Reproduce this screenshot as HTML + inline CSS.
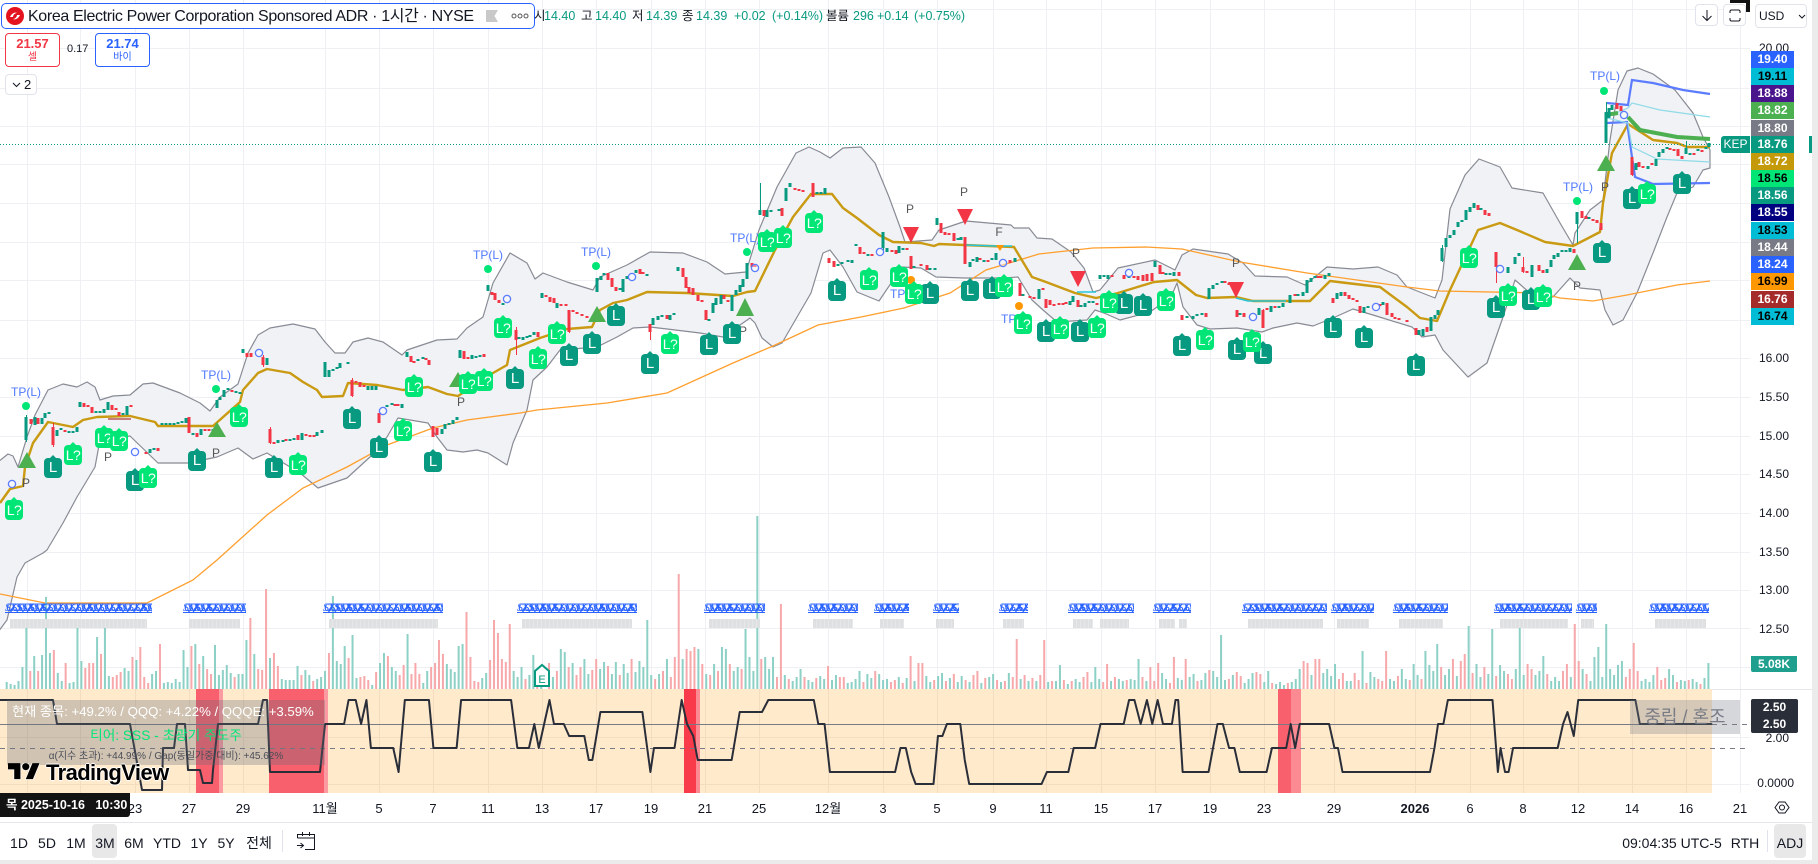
<!DOCTYPE html>
<html lang="ko"><head><meta charset="utf-8"><title>KEP</title>
<style>
html,body{margin:0;padding:0;background:#fff}
body{position:relative;width:1818px;height:864px;overflow:hidden;font-family:"Liberation Sans","Noto Sans CJK KR",sans-serif;color:#131722}
svg.c{position:absolute;left:0;top:0}
.a{position:absolute;white-space:nowrap}
i.m{position:absolute;width:18px;height:20px;margin:-9px 0 0 -9px;border-radius:4px;background:#089981;color:#fff;font:normal 15px/20px "Liberation Sans",sans-serif;text-align:center}
i.m:before{content:"";position:absolute;left:5.5px;top:-3px;width:0;height:0;border-left:3.5px solid transparent;border-right:3.5px solid transparent;border-bottom:3px solid #089981}
i.n{background:#00e676;font-size:14px;letter-spacing:-.5px}
i.n:before{border-bottom-color:#00e676}
.t{position:absolute;left:1751px;width:43px;height:17px;font:bold 12px/17px "Liberation Sans",sans-serif;text-align:center;color:#fff}
.k{color:#000}
.p{position:absolute;right:29px;font:12px/14px "Liberation Sans",sans-serif;color:#131722}
.x{position:absolute;top:801px;font:13px/15px "Liberation Sans","Noto Sans CJK KR",sans-serif;transform:translateX(-50%)}
.q{position:absolute;top:602px;height:10px;overflow:hidden;border-bottom:1px solid #2962ff;font:italic 12px/11px "Liberation Serif",serif;letter-spacing:-5px;color:#2962ff;white-space:nowrap}
.g{position:absolute;top:619px;height:9px;background:repeating-linear-gradient(90deg,#dfe0e2 0 3px,#e6e7e9 3px 4px)}
.r{position:absolute;top:835px;font:14px/16px "Liberation Sans","Noto Sans CJK KR",sans-serif;color:#131722;transform:translateX(-50%)}
.o{position:absolute;top:9px;font:12.5px/15px "Liberation Sans","Noto Sans CJK KR",sans-serif;white-space:nowrap}
.o.v{color:#089981}
.b{position:absolute;box-sizing:border-box;border:1px solid #e0e3eb;border-radius:4px;background:#fff}
</style></head><body>

<svg class="c" width="1818" height="864" viewBox="0 0 1818 864" fill="none">
<!-- grid -->
<path stroke="#eef0f3" d="M27.5 0V793M80.5 0V793M135.5 0V793M189.5 0V793M243.5 0V793M325.5 0V793M379.5 0V793M433.5 0V793M488.5 0V793M542.5 0V793M596.5 0V793M651.5 0V793M705.5 0V793M759.5 0V793M828.5 0V793M883.5 0V793M937.5 0V793M993.5 0V793M1046.5 0V793M1101.5 0V793M1155.5 0V793M1210.5 0V793M1264.5 0V793M1334.5 0V793M1415.5 0V793M1470.5 0V793M1523.5 0V793M1578.5 0V793M1632.5 0V793M1686.5 0V793M1740.5 0V793"/>
<path stroke="#eef0f3" d="M0 9.5H1750M0 48.5H1750M0 88.5H1750M0 126.5H1750M0 164.5H1750M0 203.5H1750M0 242.5H1750M0 280.5H1750M0 320.5H1750M0 358.5H1750M0 397.5H1750M0 436.5H1750M0 474.5H1750M0 513.5H1750M0 552.5H1750M0 590.5H1750M0 628.5H1750M0 667.5H1750M0 737.5H1750M0 784.5H1750"/>
<!-- band -->
<path fill="#f0f2f5" stroke="#888b95" stroke-width="1.2" stroke-linejoin="round" d="M-2 462L8 454 13 456 18 467 27 437 35 415 48 390 63 384 77 387 87 382 95 387 100 400 113 396 130 395 143 384 153 383 180 393 200 403 210 411 220 397 238 384 248 353 258 335 270 328 293 324 315 329 325 342 335 353 345 353 353 342 368 338 383 342 402 355 407 350 437 340 457 339 467 328 483 317 493 283 510 253 527 263 535 279 543 273 567 282 593 290 600 277 627 265 650 252 683 253 707 262 725 274 746 272 759 230 777 187 796 153 809 147 820 152 830 158 843 148 861 147 875 163 889 197 900 227 905 242 932 240 939 230 966 221 1011 225 1014 228 1029 228 1037 238 1052 239 1071 252 1084 268 1093 292 1100 290 1118 268 1155 260 1175 270 1182 255 1193 249 1228 254 1243 263 1255 276 1287 277 1305 285 1327 267 1353 269 1378 267 1397 275 1407 287 1435 298 1442 280 1450 209 1465 175 1479 159 1500 167 1512 188 1543 193 1560 223 1573 245 1575 233 1590 210 1603 200 1610 140 1618 90 1627 71 1638 68 1653 74 1675 90 1693 113 1703 137 1710 150 1710 168 1703 170 1693 187 1677 193 1667 217 1653 253 1637 293 1623 320 1613 325 1605 310 1600 290 1580 288 1570 278 1553 297 1530 293 1515 280 1507 305 1502 320 1487 363 1468 377 1443 350 1435 335 1422 337 1412 327 1373 315 1353 309 1333 318 1313 326 1297 323 1273 328 1262 332 1237 328 1210 329 1197 325 1183 307 1177 283 1171 297 1150 312 1120 320 1104 313 1095 310 1087 320 1057 322 1043 310 1032 300 1018 277 1004 278 964 278 936 277 921 268 902 267 879 301 857 292 843 267 830 250 823 253 811 293 782 343 773 347 762 338 755 323 750 318 723 337 700 333 667 329 650 327 633 328 617 337 597 347 560 350 547 367 533 380 527 410 513 443 507 465 488 453 477 450 463 452 447 450 437 437 428 423 398 418 387 437 370 457 347 478 318 488 300 473 267 453 253 459 238 448 217 457 188 463 158 463 130 436 100 440 95 467 77 497 63 523 47 550 43 553 25 563 17 577 7 620-2 632Z"/>
<!-- orange MA -->
<path stroke="#ff9f2e" stroke-width="1.3" d="M0 594L45 603 147 603 193 580 217 560 267 515 303 488 347 467 387 445 433 428 467 420 520 413 537 410 607 403 667 393 700 378 733 363 773 346 818 325 861 317 904 308 950 293 986 270 1039 254 1093 248 1146 247 1182 249 1240 262 1307 273 1407 287 1440 291 1540 293 1560 298 1593 301 1627 295 1677 285 1710 281"/>
<!-- gold -->
<path stroke="#c99a12" stroke-width="2.4" stroke-linejoin="round" d="M0 503L10 489 23 486 25 467 33 443 48 422 73 427 83 420 97 417 130 416 155 422 158 426 213 426 240 402 243 390 258 373 267 369 290 373 303 382 317 390 322 397 343 396 348 383 377 385 403 390 428 387 447 394 458 396 493 373 507 365 510 350 540 338 567 329 592 327 600 310 613 303 627 300 647 292 687 293 733 296 747 292 755 291 775 250 793 217 811 194 832 194 843 208 857 218 879 235 893 242 921 243 934 246 939 244 1014 247 1032 277 1046 282 1075 293 1096 298 1118 293 1154 282 1177 280 1196 295 1207 298 1236 297 1253 301 1310 301 1330 281 1380 287 1407 307 1420 318 1437 321 1450 290 1478 230 1500 223 1517 230 1545 242 1573 246 1600 232 1603 203 1612 153 1628 124 1653 140 1677 143 1687 147 1710 147"/>
<path stroke="#26c6da" stroke-width="1.5" d="M1077 292H1096M1236 298L1248 301H1286M965 245L995 246H1012"/>
<path stroke="#c77d7d" stroke-width="2" d="M108 419H131"/>
<!-- right side lines -->
<path stroke="#5b7cff" stroke-width="2.2" d="M1607 103L1628 105 1632 80 1653 83 1683 90 1710 94M1607 123L1627 122 1632 157 1635 177 1653 184 1710 183"/>
<path stroke="#8fdbe8" stroke-width="1.2" d="M1607 117L1628 108 1632 103 1660 110 1710 117M1607 118L1628 123 1632 147 1657 159 1710 162"/>
<path stroke="#4caf50" stroke-width="4" d="M1605 115L1618 113M1628 117L1640 130 1677 137 1710 139"/>
<!-- last price -->
<path stroke="#089981" stroke-dasharray="1 2" d="M0 144.5H1721"/>
<!-- wicks -->
<path stroke="#089981" d="M26.5 415V442M760.5 183V212M883.5 232V250M1577.5 212V243M1606.5 102V143M1686.5 141V154M1442.5 245V262"/>
<path stroke="#f23645" d="M53.5 423V447M270.5 427V444M516.5 327V355M650.5 324V340M352.5 378V397M263.5 355V367M1496.5 252V283M1523.5 257V273M1263.5 309V328M1632.5 157V176M965.5 237V264M569.5 310V333"/>
<!-- bodies -->
<path stroke="#089981" stroke-width="3" shape-rendering="crispEdges" d="M26 417V440M35 417V425M42 418V424M45 413V418M49 412V414M57 430V436M61 428V430M69 431V433M73 431V433M77 427V432M80 402V407M96 411V413M100 411V413M104 409V413M108 402V410M123 413V415M127 406V415M150 449V453M154 448V450M162 423V425M166 423V425M170 423V425M174 423V425M178 422V424M182 421V423M186 418V423M193 433V435M201 429V435M213 429V431M217 400V408M220 397V400M224 390V397M228 388V390M236 391V393M240 392V394M243 349V353M267 358V365M278 440V443M283 440V442M290 439V441M294 438V440M302 433V440M317 432V436M322 430V433M325 362V377M329 370V377M333 369V371M337 367V369M340 363V368M348 362V364M368 386V390M372 386V390M376 386V390M387 405V407M392 403V405M402 404V408M407 352V357M418 359V361M423 357V359M442 429V434M445 424V429M449 423V425M453 420V424M457 417V420M460 350V358M472 355V359M476 356V358M480 355V357M488 285V291M503 303V305M519 337V339M523 337V340M527 336V338M530 335V337M534 332V335M542 293V298M557 303V308M597 278V292M601 276V280M604 273V275M620 288V290M623 279V292M627 276V279M636 270V273M647 274V276M653 318V325M658 316V320M662 315V317M670 315V320M674 313V315M678 267V271M709 319V321M713 303V313M716 298V305M721 295V304M732 295V311M736 290V295M740 285V292M743 279V287M747 263V279M760 210V215M767 210V217M771 210V212M779 209V211M786 188V201M790 183V187M817 192V194M821 192V194M825 188V194M838 264V266M842 262V264M848 260V262M852 260V263M856 244V246M868 254V256M883 232V248M887 248V252M899 246V253M903 248V250M914 266V268M930 268V270M935 268V270M937 218V225M958 238V240M961 237V240M970 262V267M973 259V261M977 257V262M984 260V262M992 258V260M996 253V260M1015 258V262M1023 294V296M1039 289V299M1070 301V305M1073 296V302M1081 305V307M1085 303V307M1089 301V303M1093 301V303M1100 275V279M1104 275V277M1108 275V279M1129 276V278M1155 261V267M1166 273V275M1170 273V275M1174 272V276M1187 316V318M1193 316V319M1197 314V316M1202 313V315M1209 288V299M1213 285V289M1217 283V285M1222 281V283M1240 313V315M1259 308V315M1271 306V312M1279 306V308M1283 303V307M1290 295V303M1298 294V296M1303 292V296M1307 280V293M1311 278V282M1315 276V278M1325 275V279M1329 273V276M1337 293V299M1341 292V296M1364 307V313M1368 306V308M1383 302V305M1419 330V335M1423 329V336M1431 317V331M1435 315V319M1438 310V315M1442 248V261M1446 238V247M1450 235V238M1454 230V235M1458 222V227M1462 220V222M1466 210V220M1470 207V212M1474 203V208M1481 208V210M1508 267V273M1515 257V264M1519 253V256M1532 265V277M1547 269V273M1551 260V267M1554 255V259M1558 253V257M1562 250V252M1566 250V252M1570 248V252M1577 212V224M1589 217V219M1606 112V143M1609 108V118M1612 105V110M1636 163V170M1648 166V169M1656 159V166M1659 152V157M1663 149V153M1667 147V149M1686 148V154M1690 153V155M1698 149V151M1706 147V149M1709 143V147"/>
<path stroke="#f23645" stroke-width="3" shape-rendering="crispEdges" d="M31 419V424M38 418V424M53 427V445M65 430V432M84 403V407M88 405V407M92 407V413M112 405V410M116 408V410M119 412V416M131 405V407M146 452V454M158 448V451M189 417V433M197 433V437M205 429V431M209 429V431M232 390V392M247 353V357M251 353V357M263 357V365M270 429V443M274 442V444M286 439V441M298 435V440M306 434V436M310 435V437M314 435V437M352 380V396M356 381V383M360 382V387M364 385V387M379 413V423M395 404V406M398 404V406M411 356V362M414 361V363M426 358V360M429 360V365M433 426V437M437 428V435M464 351V359M468 357V359M484 354V357M492 292V295M495 293V300M499 300V303M516 330V340M538 332V337M546 295V297M550 297V302M554 298V303M561 304V306M566 304V306M569 310V332M573 310V312M577 312V314M582 314V316M587 316V318M608 273V280M612 278V287M616 287V291M640 269V274M643 272V274M650 324V332M667 315V319M683 268V277M686 277V288M689 287V293M693 288V295M698 295V301M702 300V302M706 310V320M724 295V299M728 300V302M752 263V267M755 265V267M764 210V216M782 208V216M795 188V190M799 189V191M803 190V192M813 183V197M829 258V263M834 261V267M860 247V254M864 252V254M872 254V256M892 250V252M896 250V254M907 248V250M911 256V269M921 264V266M927 265V270M941 223V233M945 232V235M949 233V235M954 233V241M965 237V264M980 258V260M988 260V262M1010 260V263M1020 283V296M1030 296V298M1034 297V299M1043 288V290M1046 299V308M1050 300V305M1054 304V306M1059 303V305M1063 303V305M1066 302V304M1078 300V307M1097 303V305M1112 275V277M1124 275V279M1134 276V278M1138 276V280M1143 275V281M1147 274V281M1152 273V281M1160 265V274M1163 272V274M1179 272V276M1182 315V320M1206 313V317M1225 281V283M1229 283V285M1237 310V317M1244 313V317M1263 310V328M1267 308V310M1275 306V308M1295 294V296M1318 276V278M1321 276V278M1333 298V303M1345 292V296M1349 295V299M1353 298V300M1357 300V302M1360 306V313M1380 304V306M1387 303V315M1392 313V317M1395 317V319M1399 318V320M1407 320V322M1416 328V335M1427 327V332M1478 205V210M1485 210V215M1489 213V216M1496 252V267M1523 267V272M1527 271V273M1539 265V271M1543 270V273M1574 249V253M1582 211V218M1586 216V219M1593 219V221M1597 220V223M1601 223V230M1617 103V109M1621 106V111M1632 157V175M1639 162V167M1643 166V168M1652 163V165M1670 148V150M1674 149V151M1678 149V156M1682 156V159M1694 153V155M1702 150V152"/>
<!-- triangles -->
<path fill="#4caf50" d="M27 452L36 468H18ZM217 422L226 437H208ZM597 306L606 322H588ZM745 298L754 316H736ZM458 372L467 387H449ZM1577 254L1586 270H1568ZM1606 155L1615 171H1597Z"/>
<path fill="#f23645" d="M903 227H919L911 243ZM957 209H973L965 225ZM1070 271H1086L1078 287ZM1228 282H1244L1236 298Z"/>
<path fill="#ff9800" d="M996 245H1004L1000 251Z"/>
<!-- dots -->
<g fill="#00e676"><circle cx="26" cy="406" r="4"/><circle cx="216" cy="389" r="4"/><circle cx="488" cy="269" r="4"/><circle cx="596" cy="266" r="4"/><circle cx="747" cy="252" r="4"/><circle cx="1577" cy="201" r="4"/><circle cx="1604" cy="91" r="4"/></g>
<g fill="#ff9800"><circle cx="911" cy="280" r="4"/><circle cx="1019" cy="306" r="4"/></g>
<g stroke="#5b7cff" stroke-width="1.3" fill="#fff" fill-opacity=".4"><circle cx="12" cy="484" r="3.6"/><circle cx="135" cy="452" r="3.6"/><circle cx="259" cy="353" r="3.6"/><circle cx="383" cy="411" r="3.6"/><circle cx="507" cy="299" r="3.6"/><circle cx="632" cy="277" r="3.6"/><circle cx="755" cy="268" r="3.6"/><circle cx="880" cy="252" r="3.6"/><circle cx="1003" cy="263" r="3.6"/><circle cx="1129" cy="273" r="3.6"/><circle cx="1253" cy="317" r="3.6"/><circle cx="1376" cy="307" r="3.6"/><circle cx="1500" cy="269" r="3.6"/><circle cx="1624" cy="115" r="3.6"/></g>
<!-- labels -->
<g font-family="Liberation Sans,sans-serif" font-size="12" fill="#4f78ff" text-anchor="middle"><text x="26" y="396">TP(L)</text><text x="216" y="379">TP(L)</text><text x="488" y="259">TP(L)</text><text x="596" y="256">TP(L)</text><text x="745" y="242">TP(L)</text><text x="905" y="298">TP(L)</text><text x="1016" y="323">TP(L)</text><text x="1578" y="191">TP(L)</text><text x="1605" y="80">TP(L)</text></g>
<g font-family="Liberation Sans,sans-serif" font-size="12" fill="#555" text-anchor="middle"><text x="26" y="487">P</text><text x="108" y="461">P</text><text x="216" y="457">P</text><text x="461" y="406">P</text><text x="743" y="335">P</text><text x="910" y="213">P</text><text x="964" y="196">P</text><text x="999" y="236">F</text><text x="1076" y="257">P</text><text x="1236" y="267">P</text><text x="1605" y="191">P</text><text x="1577" y="290">P</text></g>
<!-- volume -->
<g transform="translate(6.7 689) scale(3.93 1)" fill="none" stroke-width="2">
<path stroke="#8dd0c6" vector-effect="non-scaling-stroke" style="vector-effect:non-scaling-stroke" d="M0 0v-7M1 0v-5M2 0v-4M3 0v-8M4 0v-22M5 0v-68M7 0v-33M9 0v-34M10 0v-92M11 0v-36M13 0v-16M14 0v-8M16 0v-6M17 0v-7M18 0v-61M19 0v-28M23 0v-52M25 0v-68M26 0v-13M30 0v-21M31 0v-18M33 0v-29M37 0v-15M38 0v-18M40 0v-6M41 0v-7M42 0v-6M43 0v-10M44 0v-7M45 0v-39M46 0v-22M48 0v-45M50 0v-33M53 0v-44M54 0v-14M55 0v-19M56 0v-24M57 0v-16M59 0v-15M60 0v-15M61 0v-49M63 0v-35M67 0v-31M70 0v-10M71 0v-9M72 0v-9M73 0v-9M74 0v-23M76 0v-19M77 0v-14M79 0v-10M80 0v-12M81 0v-18M83 0v-93M84 0v-28M85 0v-25M86 0v-43M88 0v-54M89 0v-11M93 0v-4M95 0v-26M96 0v-36M98 0v-22M99 0v-18M102 0v-55M106 0v-6M107 0v-18M112 0v-25M113 0v-20M114 0v-17M115 0v-43M116 0v-45M121 0v-11M122 0v-16M129 0v-18M130 0v-12M131 0v-22M133 0v-14M134 0v-34M136 0v-20M139 0v-12M141 0v-40M142 0v-37M144 0v-26M147 0v-30M148 0v-15M151 0v-20M152 0v-27M154 0v-15M155 0v-27M157 0v-25M158 0v-16M160 0v-17M161 0v-28M162 0v-22M163 0v-69M164 0v-14M166 0v-15M168 0v-30M172 0v-30M176 0v-40M178 0v-15M180 0v-25M182 0v-42M183 0v-40M185 0v-18M186 0v-22M188 0v-60M189 0v-32M190 0v-18M191 0v-173M193 0v-32M194 0v-20M195 0v-32M198 0v-14M200 0v-8M201 0v-12M202 0v-20M204 0v-9M205 0v-7M207 0v-13M208 0v-10M210 0v-9M211 0v-14M214 0v-6M215 0v-7M216 0v-10M217 0v-18M219 0v-15M220 0v-11M222 0v-15M223 0v-9M224 0v-10M227 0v-12M229 0v-11M231 0v-8M234 0v-13M235 0v-7M237 0v-13M238 0v-16M240 0v-11M242 0v-7M243 0v-13M245 0v-7M248 0v-6M250 0v-12M251 0v-15M253 0v-7M255 0v-16M258 0v-10M260 0v-8M262 0v-8M265 0v-7M267 0v-8M268 0v-24M270 0v-5M272 0v-10M273 0v-7M276 0v-7M277 0v-22M278 0v-10M281 0v-8M283 0v-10M284 0v-8M286 0v-10M287 0v-9M288 0v-30M290 0v-8M294 0v-16M295 0v-10M298 0v-11M299 0v-9M301 0v-12M302 0v-15M304 0v-9M305 0v-16M307 0v-18M308 0v-12M309 0v-54M310 0v-9M312 0v-14M315 0v-6M316 0v-10M317 0v-16M320 0v-7M321 0v-18M323 0v-5M324 0v-7M325 0v-4M327 0v-7M328 0v-10M329 0v-20M332 0v-14M335 0v-16M336 0v-20M337 0v-13M338 0v-25M341 0v-8M342 0v-8M345 0v-38M347 0v-17M348 0v-12M352 0v-10M353 0v-8M355 0v-20M356 0v-10M358 0v-25M359 0v-14M361 0v-38M362 0v-24M363 0v-18M364 0v-45M366 0v-14M367 0v-20M369 0v-13M372 0v-63M374 0v-25M375 0v-12M377 0v-15M378 0v-60M380 0v-24M381 0v-18M384 0v-20M385 0v-61M386 0v-14M389 0v-14M390 0v-18M391 0v-33M393 0v-8M394 0v-12M395 0v-8M398 0v-12M401 0v-20M403 0v-8M404 0v-32M405 0v-42M406 0v-12M407 0v-65M408 0v-20M409 0v-14M410 0v-24M411 0v-28M416 0v-8M417 0v-10M418 0v-7M419 0v-14M423 0v-20M424 0v-14M426 0v-9M427 0v-8M429 0v-10M430 0v-7M432 0v-11M433 0v-26"/>
<path stroke="#f7a8ab" style="vector-effect:non-scaling-stroke" d="M6 0v-18M8 0v-18M12 0v-39M15 0v-26M20 0v-21M21 0v-26M22 0v-26M24 0v-35M27 0v-12M28 0v-14M29 0v-17M32 0v-32M34 0v-42M35 0v-12M36 0v-6M39 0v-45M47 0v-43M49 0v-25M51 0v-20M52 0v-15M58 0v-12M62 0v-71M64 0v-20M65 0v-19M66 0v-100M68 0v-36M69 0v-23M75 0v-14M78 0v-8M82 0v-36M87 0v-31M90 0v-12M91 0v-13M92 0v-9M94 0v-17M97 0v-33M100 0v-14M101 0v-24M103 0v-15M104 0v-26M105 0v-15M108 0v-22M109 0v-26M110 0v-49M111 0v-35M117 0v-77M118 0v-32M119 0v-8M120 0v-7M123 0v-29M124 0v-69M125 0v-56M126 0v-30M127 0v-27M128 0v-65M132 0v-10M135 0v-18M138 0v-26M140 0v-18M143 0v-22M145 0v-14M146 0v-22M149 0v-19M150 0v-30M153 0v-23M156 0v-14M159 0v-30M165 0v-10M167 0v-18M169 0v-12M170 0v-32M171 0v-115M173 0v-40M174 0v-38M175 0v-42M177 0v-25M179 0v-14M181 0v-18M184 0v-25M187 0v-20M192 0v-30M196 0v-12M197 0v-85M199 0v-10M203 0v-12M206 0v-11M209 0v-23M212 0v-12M213 0v-12M218 0v-7M221 0v-18M225 0v-7M226 0v-9M228 0v-6M230 0v-33M232 0v-26M233 0v-26M236 0v-9M239 0v-8M241 0v-15M244 0v-9M246 0v-14M247 0v-18M249 0v-11M252 0v-9M254 0v-8M256 0v-12M257 0v-50M259 0v-14M261 0v-11M263 0v-14M264 0v-49M266 0v-8M269 0v-9M271 0v-8M274 0v-12M275 0v-17M279 0v-7M280 0v-25M282 0v-12M285 0v-9M289 0v-12M291 0v-22M292 0v-8M293 0v-26M296 0v-6M297 0v-32M300 0v-30M303 0v-8M306 0v-19M311 0v-10M313 0v-17M314 0v-13M318 0v-17M319 0v-15M322 0v-6M326 0v-6M330 0v-28M331 0v-26M333 0v-30M334 0v-30M339 0v-10M340 0v-16M343 0v-16M344 0v-9M346 0v-6M349 0v-10M350 0v-8M351 0v-38M354 0v-13M357 0v-9M360 0v-10M365 0v-22M368 0v-30M370 0v-28M371 0v-35M373 0v-16M376 0v-22M379 0v-13M382 0v-15M383 0v-10M387 0v-25M388 0v-20M392 0v-15M396 0v-18M397 0v-25M399 0v-65M400 0v-28M402 0v-15M412 0v-12M413 0v-20M414 0v-46M415 0v-18M420 0v-22M421 0v-9M422 0v-11M425 0v-7M428 0v-9M431 0v-5"/>
</g>
<!-- pane separators -->
<path stroke="#e4e6ea" d="M0 689.5H1812M0 822.5H1812"/>
<!-- osc pane -->
<rect x="0" y="689" width="1712" height="104" fill="#ffeacc"/>
<path stroke="#f3dcc0" d="M27.5 689V793M80.5 689V793M135.5 689V793M189.5 689V793M243.5 689V793M325.5 689V793M379.5 689V793M433.5 689V793M488.5 689V793M542.5 689V793M596.5 689V793M651.5 689V793M705.5 689V793M759.5 689V793M828.5 689V793M883.5 689V793M937.5 689V793M993.5 689V793M1046.5 689V793M1101.5 689V793M1155.5 689V793M1210.5 689V793M1264.5 689V793M1334.5 689V793M1415.5 689V793M1470.5 689V793M1523.5 689V793M1578.5 689V793M1632.5 689V793M1686.5 689V793M0 737.5H1712M0 784.5H1712"/>
<rect x="196" y="689" width="23" height="104" fill="#f7606c"/><rect x="219" y="689" width="4" height="104" fill="#fb9aa0"/>
<rect x="269" y="689" width="55" height="104" fill="#f7606c"/><rect x="324" y="689" width="4" height="104" fill="#fb9aa0"/>
<rect x="684" y="689" width="12" height="104" fill="#f93a4a"/><rect x="696" y="689" width="4" height="104" fill="#fb8a92"/>
<rect x="1278" y="689" width="13" height="104" fill="#f7606c"/><rect x="1291" y="689" width="10" height="104" fill="#fb8a92"/>
<path stroke="#787b86" d="M0 724.5H1712"/>
<path stroke="#787b86" stroke-dasharray="5 5" d="M0 748.5H1750M1712 724.5H1750"/>
<path stroke="#2a2e39" stroke-width="2" stroke-linejoin="round" d="M0 700L53 700 57 724 130 724 142 790 162 790 163 748 174 748 177 724 185 724 188 770 200 770 203 783 212 783 213 770 218 724 258 724 263 700 267 700 270 772 320 772 325 724"/>
<g transform="translate(320 0) scale(.893 1)"><path stroke="#2a2e39" stroke-width="2" stroke-linejoin="round" style="vector-effect:non-scaling-stroke" d="M5 724L27 724 32 700 40 700 46 724 52 700 57 748 82 748 88 772 95 700 122 700 127 748 153 748 158 700 214 700 221 748 234 748 240 724 245 748 257 700 262 724 273 724 279 736 296 736 301 760 305 760 314 712 361 712 370 772 374 748 397 748 405 700 411 724 418 736 423 760 461 760 470 712 495 712 502 700 553 700 558 724 565 724 571 772 644 772 650 748 656 748 662 772 667 784 687 784 692 736 697 736 702 724 717 724 722 760 727 784 808 784 814 772 838 772 844 748 868 748 874 724 900 724 906 700 912 700 919 724 926 700 932 724 938 700 944 724 954 724 958 700 961 700 966 772 995 772 1005 724 1011 724 1018 748 1024 748 1030 772 1060 772 1066 748 1082 748 1087 724 1092 748 1097 724 1130 724 1136 748 1140 748 1145 772 1243 772 1248 748 1252 724 1258 724 1263 700 1313 700 1319 772 1322 748 1327 772 1331 772 1336 748 1386 748 1392 724 1397 712 1404 736 1409 700 1473 700 1478 724 1559 724"/></g>
<!-- bottom calendar & sep -->
<path stroke="#131722" d="M297.5 838V834.5H314.5V849.5H305M297.5 838H314.5M302.5 832V836M309.5 832V836M297 845.5H303M300.5 843L303.5 845.5 300.5 848"/>
<path stroke="#e0e3eb" d="M282.5 830V852M1767.5 830V852"/>
<!-- gear -->
<path stroke="#131722" d="M1775 807.5L1779 802H1785L1789 807.5 1785 813H1779Z"/><circle cx="1782" cy="807.5" r="2.5" stroke="#131722"/>
<!-- E marker -->
<path fill="#fff" stroke="#089981" stroke-width="2" d="M535 686V671L542 665 549 671V686Z"/>
<text x="542" y="683" font-family="Liberation Sans,sans-serif" font-size="11" fill="#089981" text-anchor="middle">E</text>
</svg>

<!-- SQZ labels -->
<div class="q" style="left:5px;width:147px">SQZSQSSQSQZSSQSQZSSQZSQSQZSQSQZSQZSQSQZSSQSQZSQSQZSQZSSQSQZSQZSQZSSQSQZSQSQZ</div>
<div class="q" style="left:183px;width:63px">SQSQZSSQSQZSSQZSQSQZSQSQZSQSQZSSQSQZ</div>
<div class="q" style="left:323px;width:120px">SQZSQSSQSQZSSQSQZSSQZSQSQZSQSQZSQZSQSQZSSQSQZSQSQZSQZSSQSQZSQSQZ</div>
<div class="q" style="left:517px;width:120px">SQZSQSSQSQZSSQSQZSSQZSQSQZSQSQZSQZSQSQZSSQSQZSQSQZSQZSSQSQZSQSQZ</div>
<div class="q" style="left:704px;width:61px">SQSQZSSQSQZSSQZSQSQZSQSQZSQSQZSSQZ</div>
<div class="q" style="left:808px;width:50px">SQSQZSSQSQZSSQZSQSQZSQSQZSQ</div>
<div class="q" style="left:874px;width:35px">SQSQZSSQSQZSQZSSQZ</div>
<div class="q" style="left:933px;width:26px">SQSQZSQZSSQZSQ</div>
<div class="q" style="left:999px;width:29px">SQSQZSQZSSQZSQZ</div>
<div class="q" style="left:1068px;width:66px">SQSQZSSQSQZSSQZSQSQZSQSQZSQZSQSQZSSQ</div>
<div class="q" style="left:1153px;width:38px">SQSQZSQZSSQZSQZSQSQZ</div>
<div class="q" style="left:1242px;width:85px">SQZSQSSQSQZSSQSQZSSQZSQSQZSQSQZSQZSQZSQSQZSSQSQZ</div>
<div class="q" style="left:1331px;width:43px">SQSQZSSQSQZSQZSQSQZSQ</div>
<div class="q" style="left:1393px;width:55px">SQSQZSSQSQZSSQZSQSQZSQSQZSQ</div>
<div class="q" style="left:1494px;width:78px">SQSQZSSQSQZSSQZSQSQZSQSQZSQZSQZSQSQZSSQSQZ</div>
<div class="q" style="left:1576px;width:21px">SQSQZSQSQZ</div>
<div class="q" style="left:1649px;width:60px">SQSQZSSQSQZSSQZSQSQZSQZSQSQZSQZ</div>
<div class="g" style="left:10px;width:137px"></div><div class="g" style="left:189px;width:51px"></div><div class="g" style="left:329px;width:109px"></div><div class="g" style="left:522px;width:110px"></div><div class="g" style="left:709px;width:51px"></div><div class="g" style="left:813px;width:40px"></div><div class="g" style="left:880px;width:24px"></div><div class="g" style="left:936px;width:18px"></div><div class="g" style="left:1003px;width:21px"></div><div class="g" style="left:1073px;width:20px"></div><div class="g" style="left:1100px;width:29px"></div><div class="g" style="left:1159px;width:16px"></div><div class="g" style="left:1179px;width:8px"></div><div class="g" style="left:1248px;width:75px"></div><div class="g" style="left:1337px;width:32px"></div><div class="g" style="left:1399px;width:44px"></div><div class="g" style="left:1500px;width:68px"></div><div class="g" style="left:1581px;width:13px"></div><div class="g" style="left:1655px;width:51px"></div>

<!-- dark L badges -->
<i class="m" style="left:53px;top:467px">L</i><i class="m" style="left:197px;top:460px">L</i><i class="m" style="left:135px;top:480px">L</i><i class="m" style="left:274px;top:467px">L</i><i class="m" style="left:352px;top:418px">L</i><i class="m" style="left:379px;top:447px">L</i><i class="m" style="left:433px;top:461px">L</i><i class="m" style="left:515px;top:378px">L</i><i class="m" style="left:569px;top:355px">L</i><i class="m" style="left:592px;top:343px">L</i><i class="m" style="left:616px;top:315px">L</i><i class="m" style="left:650px;top:363px">L</i><i class="m" style="left:709px;top:344px">L</i><i class="m" style="left:732px;top:333px">L</i><i class="m" style="left:837px;top:290px">L</i><i class="m" style="left:930px;top:293px">L</i><i class="m" style="left:970px;top:290px">L</i><i class="m" style="left:992px;top:288px">L</i><i class="m" style="left:1046px;top:331px">L</i><i class="m" style="left:1080px;top:331px">L</i><i class="m" style="left:1124px;top:303px">L</i><i class="m" style="left:1143px;top:305px">L</i><i class="m" style="left:1182px;top:345px">L</i><i class="m" style="left:1237px;top:349px">L</i><i class="m" style="left:1263px;top:353px">L</i><i class="m" style="left:1333px;top:327px">L</i><i class="m" style="left:1364px;top:337px">L</i><i class="m" style="left:1416px;top:365px">L</i><i class="m" style="left:1496px;top:307px">L</i><i class="m" style="left:1531px;top:299px">L</i><i class="m" style="left:1602px;top:252px">L</i><i class="m" style="left:1632px;top:198px">L</i><i class="m" style="left:1682px;top:183px">L</i>
<!-- light L? badges -->
<i class="m n" style="left:14px;top:509px">L?</i><i class="m n" style="left:73px;top:454px">L?</i><i class="m n" style="left:104px;top:437px">L?</i><i class="m n" style="left:119px;top:440px">L?</i><i class="m n" style="left:148px;top:477px">L?</i><i class="m n" style="left:239px;top:416px">L?</i><i class="m n" style="left:298px;top:464px">L?</i><i class="m n" style="left:414px;top:386px">L?</i><i class="m n" style="left:403px;top:430px">L?</i><i class="m n" style="left:468px;top:383px">L?</i><i class="m n" style="left:484px;top:380px">L?</i><i class="m n" style="left:503px;top:327px">L?</i><i class="m n" style="left:538px;top:358px">L?</i><i class="m n" style="left:557px;top:333px">L?</i><i class="m n" style="left:670px;top:343px">L?</i><i class="m n" style="left:767px;top:241px">L?</i><i class="m n" style="left:783px;top:237px">L?</i><i class="m n" style="left:814px;top:222px">L?</i><i class="m n" style="left:869px;top:279px">L?</i><i class="m n" style="left:899px;top:276px">L?</i><i class="m n" style="left:914px;top:293px">L?</i><i class="m n" style="left:1004px;top:286px">L?</i><i class="m n" style="left:1023px;top:323px">L?</i><i class="m n" style="left:1060px;top:328px">L?</i><i class="m n" style="left:1097px;top:327px">L?</i><i class="m n" style="left:1109px;top:302px">L?</i><i class="m n" style="left:1166px;top:300px">L?</i><i class="m n" style="left:1205px;top:339px">L?</i><i class="m n" style="left:1252px;top:341px">L?</i><i class="m n" style="left:1469px;top:257px">L?</i><i class="m n" style="left:1508px;top:295px">L?</i><i class="m n" style="left:1543px;top:296px">L?</i><i class="m n" style="left:1647px;top:193px">L?</i>

<!-- top legend -->
<div class="a" style="left:1px;top:3px;width:532px;height:24px;border:1px solid #2962ff;border-radius:5px;background:#fff"></div>
<svg class="a" style="left:6px;top:7px" width="18" height="18" viewBox="0 0 18 18"><circle cx="9" cy="9" r="9" fill="#e3141f"/><path d="M4 10c2-4 5-5 7-4-2 0-4 2-4 4zM14 8c-2 4-5 5-7 4 2 0 4-2 4-4z" fill="#fff"/></svg>
<div class="a" style="left:28px;top:7px;font-size:16px;line-height:20px;letter-spacing:-.36px">Korea Electric Power Corporation Sponsored ADR · 1시간 · NYSE</div>
<svg class="a" style="left:485px;top:9px" width="14" height="14" viewBox="0 0 14 14"><path d="M1 1H13L9.5 7 13 13H1Z" fill="#c9c9c9"/></svg>
<svg class="a" style="left:511px;top:13px" width="18" height="6" viewBox="0 0 18 6" fill="none" stroke="#555"><circle cx="3" cy="3" r="2"/><circle cx="9" cy="3" r="2"/><circle cx="15" cy="3" r="2"/></svg>
<span class="o" style="left:534px">시</span><span class="o v" style="left:544px">14.40</span>
<span class="o" style="left:581px">고</span><span class="o v" style="left:595px">14.40</span>
<span class="o" style="left:632px">저</span><span class="o v" style="left:646px">14.39</span>
<span class="o" style="left:682px">종</span><span class="o v" style="left:696px">14.39</span>
<span class="o v" style="left:734px">+0.02</span><span class="o v" style="left:772px">(+0.14%)</span>
<span class="o" style="left:826px">볼륨</span><span class="o v" style="left:853px">296</span>
<span class="o v" style="left:877px">+0.14</span><span class="o v" style="left:914px">(+0.75%)</span>

<div class="b" style="left:5px;top:33px;width:55px;height:34px;border-color:#f23645;text-align:center;color:#f23645"><div style="font:bold 13px/15px 'Liberation Sans';margin-top:2px">21.57</div><div style="font:10px/13px 'Liberation Sans','Noto Sans CJK KR'">셀</div></div>
<div class="a" style="left:67px;top:43px;font-size:11px;line-height:13px">0.17</div>
<div class="b" style="left:95px;top:33px;width:55px;height:34px;border-color:#2962ff;text-align:center;color:#2962ff"><div style="font:bold 13px/15px 'Liberation Sans';margin-top:2px">21.74</div><div style="font:10px/13px 'Liberation Sans','Noto Sans CJK KR'">바이</div></div>
<div class="b" style="left:5px;top:74px;width:32px;height:21px"><svg class="a" style="left:6px;top:7px" width="9" height="6" viewBox="0 0 9 6" fill="none" stroke="#131722"><path d="M1 1L4.5 4.5 8 1"/></svg><span class="a" style="left:18px;top:2px;font-size:13px;line-height:15px">2</span></div>

<!-- top right -->
<div class="b" style="left:1695px;top:4px;width:23px;height:22px"><svg class="a" style="left:5px;top:4px" width="12" height="13" viewBox="0 0 12 13" fill="none" stroke="#131722"><path d="M6 1V11.5M1.5 7L6 11.5 10.5 7"/></svg></div>
<div class="b" style="left:1723px;top:4px;width:23px;height:22px"><svg class="a" style="left:5px;top:4px" width="12" height="13" viewBox="0 0 12 13" fill="none" stroke="#131722"><path d="M1 4V2.5Q1 1 2.5 1H9.5Q11 1 11 2.5V4M1 9V10.5Q1 12 2.5 12H9.5Q11 12 11 10.5V9"/></svg></div>
<div class="a" style="left:1730px;top:0;width:20px;height:3px;background:#111"></div>
<div class="a" style="left:1746px;top:0;width:4px;height:12px;background:#111"></div>
<div class="b" style="left:1755px;top:4px;width:52px;height:24px;font-size:12px;line-height:22px;padding-left:3px">USD<svg class="a" style="left:42px;top:9px" width="8" height="6" viewBox="0 0 8 6" fill="none" stroke="#131722"><path d="M1 1L4 4 7 1"/></svg></div>

<!-- right price labels -->
<div class="p" style="top:41px">20.00</div>
<div class="p" style="top:351px">16.00</div><div class="p" style="top:390px">15.50</div><div class="p" style="top:429px">15.00</div><div class="p" style="top:467px">14.50</div><div class="p" style="top:506px">14.00</div><div class="p" style="top:545px">13.50</div><div class="p" style="top:583px">13.00</div><div class="p" style="top:622px">12.50</div>
<div class="p" style="top:731px">2.00</div><div class="p" style="top:776px;right:24px">0.0000</div>
<div class="t" style="top:51px;background:#2962ff">19.40</div>
<div class="t k" style="top:68px;background:#00bcd4">19.11</div>
<div class="t" style="top:85px;background:#4a148c">18.88</div>
<div class="t" style="top:102px;background:#4caf50">18.82</div>
<div class="t" style="top:120px;background:#787b86">18.80</div>
<div class="t" style="top:136px;background:#089981">18.76</div>
<div class="t" style="top:153px;background:#c49a0a">18.72</div>
<div class="t k" style="top:170px;background:#00e676">18.56</div>
<div class="t" style="top:187px;background:#089981">18.56</div>
<div class="t" style="top:204px;background:#000080">18.55</div>
<div class="t k" style="top:222px;background:#00bcd4">18.53</div>
<div class="t" style="top:239px;background:#787b86">18.44</div>
<div class="t" style="top:256px;background:#2962ff">18.24</div>
<div class="t k" style="top:273px;background:#ff9800">16.99</div>
<div class="t" style="top:291px;background:#a52a2a">16.76</div>
<div class="t k" style="top:308px;background:#00bcd4">16.74</div>
<div class="a" style="left:1721px;top:136px;width:29px;height:17px;background:#089981;color:#fff;font:12px/17px 'Liberation Sans';text-align:center;border-radius:3px 0 0 3px">KEP</div>
<div class="a" style="left:1809px;top:136px;width:3px;height:17px;background:#089981"></div>
<div class="a" style="left:1751px;top:656px;width:46px;height:16px;background:#1fa08f;color:#fff;font:bold 12px/16px 'Liberation Sans';text-align:center;border-radius:0 0 2px 2px">5.08K</div>
<div class="a" style="left:1751px;top:699px;width:47px;height:34px;background:#2a2e39;color:#fff;font:bold 12px/17px 'Liberation Sans';text-align:center;border-radius:2px">2.50<br>2.50</div>

<!-- osc overlay -->
<div class="a" style="left:7px;top:700px;width:318px;height:65px;background:rgba(100,105,120,.3)"></div>
<div class="a" style="left:12px;top:703px;font-size:13.2px;line-height:17px;color:#fff">현재 종목: +49.2% / QQQ: +4.22% / QQQE: +3.59%</div>
<div class="a" style="left:7px;top:727px;width:318px;text-align:center;font-size:13.7px;line-height:17px;color:#00e676">티어: SSS - 초광기 주도주</div>
<div class="a" style="left:7px;top:750px;width:318px;text-align:center;font-size:10px;line-height:13px;color:#4a4d57">α(지수 초과): +44.99% / Gap(동일가중 대비): +45.62%</div>
<div class="a" style="left:1630px;top:700px;width:110px;height:34px;background:rgba(120,123,134,.3);text-align:center;font-size:18px;line-height:34px;color:#787b86">중립 / 혼조</div>

<!-- logo -->
<svg class="a" style="left:8px;top:763px" width="32" height="18" viewBox="0 0 36 20"><g fill="#000" stroke="#fff" stroke-width="1.5" paint-order="stroke"><path d="M14 18H7V7H0V0h14zM28 18h-8l7.5-18h8z"/><circle cx="20" cy="4" r="4"/></g></svg>
<div class="a" style="left:46px;top:760px;font:bold 22px/26px 'Liberation Sans';color:#000;letter-spacing:-.6px;-webkit-text-stroke:0;text-shadow:1px 0 #fff,-1px 0 #fff,0 1px #fff,0 -1px #fff">TradingView</div>

<!-- time axis -->
<span class="x" style="left:135px">23</span><span class="x" style="left:189px">27</span><span class="x" style="left:243px">29</span><span class="x" style="left:325px">11월</span><span class="x" style="left:379px">5</span><span class="x" style="left:433px">7</span><span class="x" style="left:488px">11</span><span class="x" style="left:542px">13</span><span class="x" style="left:596px">17</span><span class="x" style="left:651px">19</span><span class="x" style="left:705px">21</span><span class="x" style="left:759px">25</span><span class="x" style="left:828px">12월</span><span class="x" style="left:883px">3</span><span class="x" style="left:937px">5</span><span class="x" style="left:993px">9</span><span class="x" style="left:1046px">11</span><span class="x" style="left:1101px">15</span><span class="x" style="left:1155px">17</span><span class="x" style="left:1210px">19</span><span class="x" style="left:1264px">23</span><span class="x" style="left:1334px">29</span><span class="x" style="left:1415px;font-weight:bold">2026</span><span class="x" style="left:1470px">6</span><span class="x" style="left:1523px">8</span><span class="x" style="left:1578px">12</span><span class="x" style="left:1632px">14</span><span class="x" style="left:1686px">16</span><span class="x" style="left:1740px">21</span>
<div class="a" style="left:0;top:793px;width:130px;height:24px;background:#131313;border-radius:0 0 3px 0;color:#fff;font:bold 12.5px/24px 'Liberation Sans','Noto Sans CJK KR';padding-left:6px;box-sizing:border-box;white-space:pre">목 2025-10-16   10:30</div>

<!-- bottom toolbar -->
<div class="a" style="left:92px;top:824px;width:25px;height:34px;background:#e8e8e8;border-radius:4px"></div>
<div class="a" style="left:1774px;top:824px;width:32px;height:34px;background:#e8e8e8;border-radius:4px"></div>
<span class="r" style="left:19px">1D</span><span class="r" style="left:47px">5D</span><span class="r" style="left:76px">1M</span><span class="r" style="left:105px">3M</span><span class="r" style="left:134px">6M</span><span class="r" style="left:167px">YTD</span><span class="r" style="left:199px">1Y</span><span class="r" style="left:226px">5Y</span><span class="r" style="left:259px">전체</span>
<span class="r" style="left:1672px">09:04:35 UTC-5</span><span class="r" style="left:1745px">RTH</span><span class="r" style="left:1790px">ADJ</span>

<!-- window frame -->
<div class="a" style="left:1812px;top:0;width:6px;height:864px;background:#ebebeb"></div>
<div class="a" style="left:0;top:860px;width:1818px;height:4px;background:#ebebeb"></div>
</body></html>
